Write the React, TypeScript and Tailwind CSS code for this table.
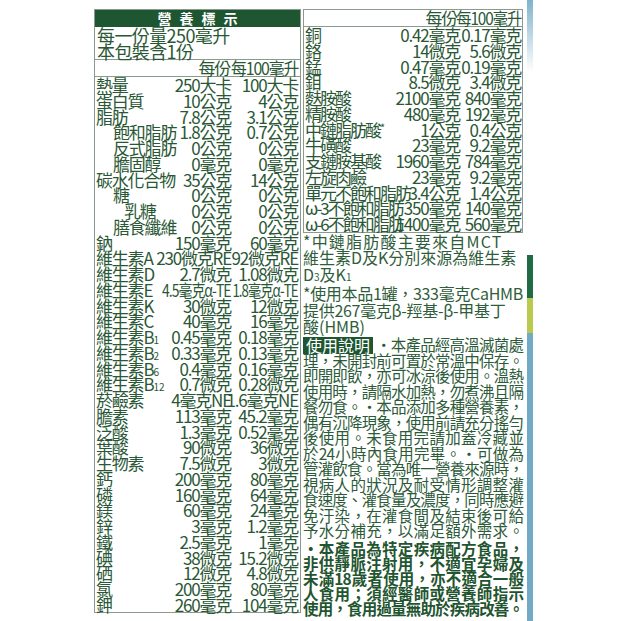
import type { ReactNode } from "react";

type Row = { name: ReactNode; indent?: 0 | 1 | 2; a: ReactNode; b: ReactNode; squeeze?: boolean };

const Sub = ({ children }: { children: ReactNode }) => (
  <span className="text-[10px] tracking-normal">{children}</span>
);

const leftRows: Row[] = [
  { name: "熱量", a: "250大卡", b: "100大卡" },
  { name: "蛋白質", a: "10公克", b: "4公克" },
  { name: "脂肪", a: "7.8公克", b: "3.1公克" },
  { name: "飽和脂肪", indent: 1, a: "1.8公克", b: "0.7公克" },
  { name: "反式脂肪", indent: 1, a: "0公克", b: "0公克" },
  { name: "膽固醇", indent: 1, a: "0毫克", b: "0毫克" },
  { name: "碳水化合物", a: "35公克", b: "14公克" },
  { name: "糖", indent: 1, a: "0公克", b: "0公克" },
  { name: "乳糖", indent: 2, a: "0公克", b: "0公克" },
  { name: "膳食纖維", indent: 1, a: "0公克", b: "0公克" },
  { name: "鈉", a: "150毫克", b: "60毫克" },
  { name: "維生素A", a: "230微克RE", b: "92微克RE" },
  { name: "維生素D", a: "2.7微克", b: "1.08微克" },
  { name: "維生素E", a: "4.5毫克α-TE", b: "1.8毫克α-TE", squeeze: true },
  { name: "維生素K", a: "30微克", b: "12微克" },
  { name: "維生素C", a: "40毫克", b: "16毫克" },
  { name: <>維生素B<Sub>1</Sub></>, a: "0.45毫克", b: "0.18毫克" },
  { name: <>維生素B<Sub>2</Sub></>, a: "0.33毫克", b: "0.13毫克" },
  { name: <>維生素B<Sub>6</Sub></>, a: "0.4毫克", b: "0.16毫克" },
  { name: <>維生素B<Sub>12</Sub></>, a: "0.7微克", b: "0.28微克" },
  { name: "菸鹼素", a: "4毫克NE", b: "1.6毫克NE" },
  { name: "膽素", a: "113毫克", b: "45.2毫克" },
  { name: "泛酸", a: "1.3毫克", b: "0.52毫克" },
  { name: "葉酸", a: "90微克", b: "36微克" },
  { name: "生物素", a: "7.5微克", b: "3微克" },
  { name: "鈣", a: "200毫克", b: "80毫克" },
  { name: "磷", a: "160毫克", b: "64毫克" },
  { name: "鎂", a: "60毫克", b: "24毫克" },
  { name: "鋅", a: "3毫克", b: "1.2毫克" },
  { name: "鐵", a: "2.5毫克", b: "1毫克" },
  { name: "碘", a: "38微克", b: "15.2微克" },
  { name: "硒", a: "12微克", b: "4.8微克" },
  { name: "氯", a: "200毫克", b: "80毫克" },
  { name: "鉀", a: "260毫克", b: "104毫克" },
];

const rightRows: Row[] = [
  { name: "銅", a: "0.42毫克", b: "0.17毫克" },
  { name: "鉻", a: "14微克", b: "5.6微克" },
  { name: "錳", a: "0.47毫克", b: "0.19毫克" },
  { name: "鉬", a: "8.5微克", b: "3.4微克" },
  { name: "麩胺酸", a: "2100毫克", b: "840毫克" },
  { name: "精胺酸", a: "480毫克", b: "192毫克" },
  { name: <>中鏈脂肪酸<span className="relative -top-[5px] text-[11px]">*</span></>, a: "1公克", b: "0.4公克" },
  { name: "牛磺酸", a: "23毫克", b: "9.2毫克" },
  { name: "支鏈胺基酸", a: "1960毫克", b: "784毫克" },
  { name: "左旋肉鹼", a: "23毫克", b: "9.2毫克" },
  { name: "單元不飽和脂肪", a: "3.4公克", b: "1.4公克" },
  { name: "ω-3不飽和脂肪", a: "350毫克", b: "140毫克" },
  { name: "ω-6不飽和脂肪", a: "1400毫克", b: "560毫克" },
];

const usage = [
  "理，未開封前可置於常溫中保存。",
  "即開即飲，亦可冰涼後使用。溫熱",
  "使用時，請隔水加熱，勿煮沸且隔",
  "餐勿食。•本品添加多種營養素，",
  "偶有沉降現象，使用前請充分搖勻",
  "後使用。未食用完請加蓋冷藏並",
  "於24小時內食用完畢。•可做為",
  "管灌飲食。當為唯一營養來源時，",
  "視病人的狀況及耐受情形調整灌",
  "食速度、灌食量及濃度，同時應避",
  "免汙染，在灌食間及結束後可給",
  "予水分補充，以滿足額外需求。",
];

const warning = [
  "•本產品為特定疾病配方食品，",
  "非供靜脈注射用，不適宜孕婦及",
  "未滿18歲者使用，亦不適合一般",
  "人食用；須經醫師或營養師指示",
  "使用，食用過量無助於疾病改善。",
];

function LeftRow({ row }: { row: Row }) {
  const pad = row.indent === 2 ? "pl-[29px]" : row.indent === 1 ? "pl-[18px]" : "pl-[1px]";
  return (
    <div className="flex h-[15.75px] leading-[15.75px] whitespace-nowrap">
      <div className={`flex-1 min-w-0 ${pad}`}>{row.name}</div>
      <div className="w-[72px] flex justify-end">
        <span className={row.squeeze ? "origin-right scale-x-[0.82]" : ""}>{row.a}</span>
      </div>
      <div className="w-[69px] flex justify-end pr-[2px]">
        <span className={row.squeeze ? "origin-right scale-x-[0.78]" : ""}>{row.b}</span>
      </div>
    </div>
  );
}

function RightRow({ row }: { row: Row }) {
  return (
    <div className="flex h-[15.75px] leading-[15.75px] whitespace-nowrap">
      <div className="flex-1 min-w-0 pl-[1px] tracking-[-2px]">{row.name}</div>
      <div className="w-[64px] flex justify-end">{row.a}</div>
      <div className="w-[62px] flex justify-end pr-[1px]">{row.b}</div>
    </div>
  );
}

export default function App() {
  return (
    <div className="w-[621px] h-[621px] overflow-hidden bg-white flex pl-[94px] text-[#2a5836] font-['Noto_Sans_CJK_TC','Noto_Sans_CJK_SC',sans-serif]">
      {/* left table */}
      <div className="mt-[9px] w-[207px] h-[604px] border border-[#8c998e] flex flex-col text-[17px] tracking-[-1.2px]">
        <div className="h-[17px] bg-[#1d5631] text-white text-[14px] font-bold leading-[17px] tracking-[8px] text-center pl-[8px]">
          營養標示
        </div>
        <div className="h-[33px] border-b border-[#8c998e] px-[2px] text-[18px] leading-[16px] tracking-[-0.6px]">
          <div>每一份量250毫升</div>
          <div>本包裝含1份</div>
        </div>
        <div className="h-[17px] border-b border-[#8c998e] flex leading-[16px] whitespace-nowrap">
          <div className="flex-1" />
          <div className="w-[72px] flex justify-end pr-[1px]">每份</div>
          <div className="w-[69px] flex justify-end pr-[2px]">
            <span className="origin-right scale-x-[0.93]">每100毫升</span>
          </div>
        </div>
        {leftRows.map((r, i) => (
          <LeftRow key={i} row={r} />
        ))}
      </div>

      {/* right column */}
      <div className="ml-[2px] mt-[9px] w-[220px] flex flex-col">
        <div className="h-[224px] border border-[#8c998e] flex flex-col text-[17px] tracking-[-1.2px]">
          <div className="h-[17px] border-b border-[#8c998e] flex leading-[16px] whitespace-nowrap">
            <div className="flex-1" />
            <div className="w-[64px] flex justify-end pr-[3px]">每份</div>
            <div className="w-[62px] flex justify-end pr-[1px]">
              <span className="origin-right scale-x-[0.9]">每100毫升</span>
            </div>
          </div>
          {rightRows.map((r, i) => (
            <RightRow key={i} row={r} />
          ))}
        </div>

        <div className="text-[16px] leading-[16.4px] text-[#2f5d3b] whitespace-nowrap">
          <div className="tracking-[1.2px]">*中鏈脂肪酸主要來自MCT</div>
          <div>維生素D及K分別來源為維生素</div>
          <div>
            D<Sub>3</Sub>及K<Sub>1</Sub>
          </div>
          <div className="tracking-[-0.3px]">*使用本品1罐，333毫克CaHMB</div>
          <div className="tracking-[-0.3px]">提供267毫克β-羥基-β-甲基丁</div>
          <div>酸(HMB)</div>
        </div>

        <div className="mt-[3px] text-[15.5px] leading-[15.5px] tracking-[-0.9px] text-[#2c5b39]">
          <div className="flex h-[15.5px] items-center">
            <span className="bg-[#1d5631] text-white text-[16px] leading-[17px] px-[3px] tracking-normal">使用說明</span>
            <span className="flex-1 pl-[3px] text-justify [text-align-last:justify]">•本產品經高溫滅菌處</span>
          </div>
          {usage.map((l, i) => (
            <div key={i} className="h-[15.5px] text-justify [text-align-last:justify]">
              {l}
            </div>
          ))}
        </div>

        <div className="mt-[2px] text-[15.5px] leading-[15px] tracking-[-1px] font-bold text-[#1f5530]">
          {warning.map((l, i) => (
            <div key={i} className="h-[15px] text-justify [text-align-last:justify]">
              {l}
            </div>
          ))}
        </div>
      </div>

      {/* edge stripe */}
      <div className="ml-[4px] w-[6px] h-[621px] flex flex-col">
        <div className="h-[72px] bg-gradient-to-b from-[#7fb3cb] to-white" />
        <div className="h-[183px]" />
        <div className="h-[43px] bg-[#1f6b45]" />
        <div className="h-[35px] bg-[#b9ca4f]" />
        <div className="flex-1 bg-[#72aac5]" />
      </div>
    </div>
  );
}
